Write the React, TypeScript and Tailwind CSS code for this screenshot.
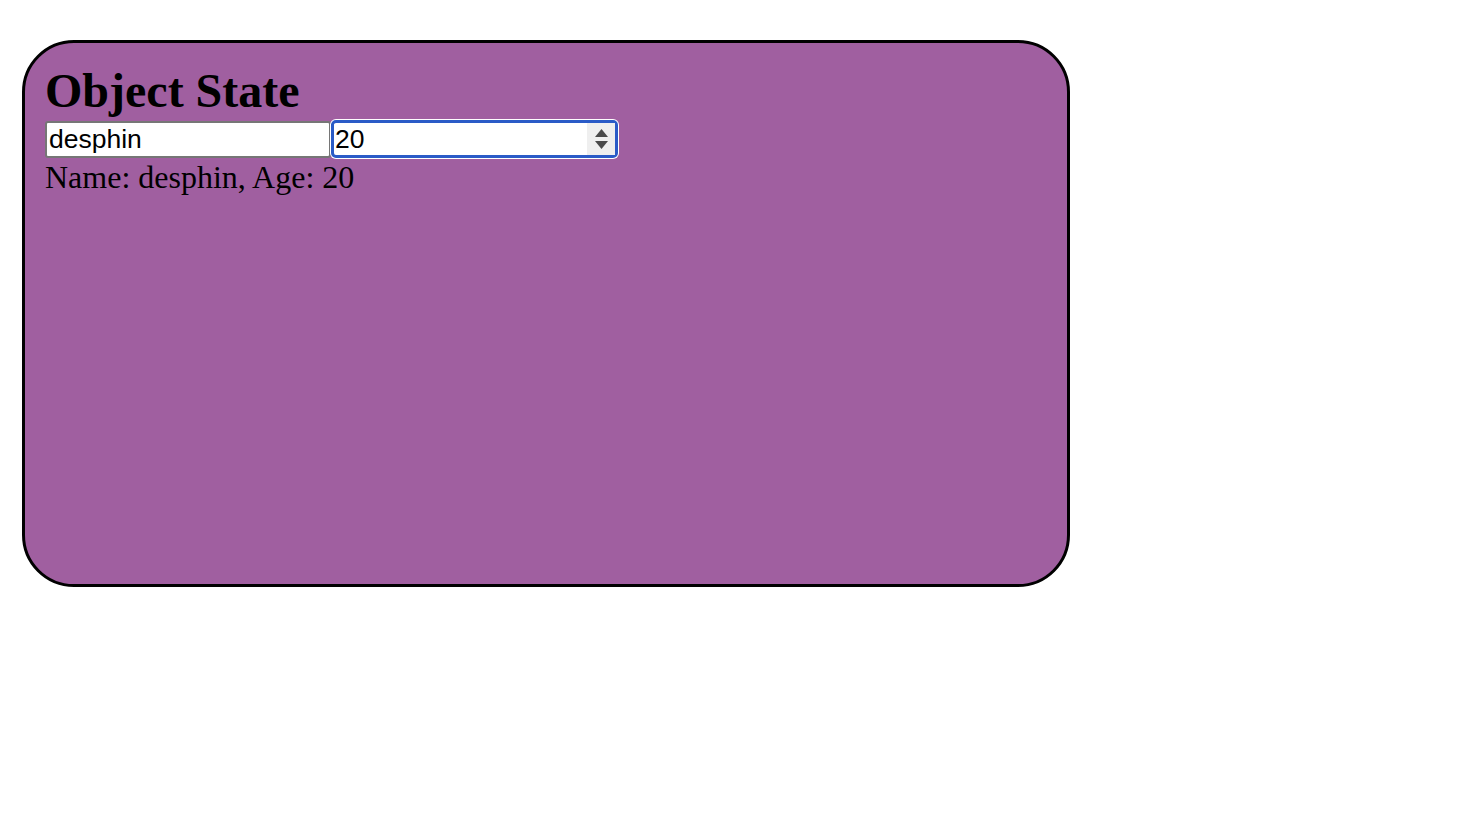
import { useState } from "react";

export default function App() {
  const [person, setPerson] = useState({ name: "desphin", age: 20 });

  return (
    <div className="min-h-screen bg-white pt-[40px] pl-[22px]">
      <div
        className="w-[1048px] h-[547px] rounded-[52px] border-[3px] border-black bg-[#a05fa0] p-[20px] text-black"
        style={{ fontFamily: '"Liberation Serif", "Times New Roman", serif' }}
      >
        <h1 className="text-[48px] font-bold leading-[56px]">Object State</h1>
        <div className="flex items-center h-[40px]">
          {/* Name input */}
          <input
            type="text"
            value={person.name}
            onChange={(e) => setPerson({ ...person, name: e.target.value })}
            className="w-[286px] h-[37px] rounded-[3px] border-2 border-[#767676] bg-white px-[2px] text-[26.5px] leading-none outline-none"
            style={{ fontFamily: '"Liberation Sans", Arial, sans-serif' }}
          />
          {/* Age input, shown focused */}
          <div className="relative w-[289px] h-[40px] rounded-[6px] bg-white p-[1px] -ml-[1px]">
            <div className="flex h-full items-center rounded-[5px] border-[3px] border-[#2a5bc7] bg-white">
              <input
                type="text"
                value={String(person.age)}
                onChange={(e) => setPerson({ ...person, age: Number(e.target.value) || 0 })}
                className="h-full flex-1 min-w-0 bg-transparent pl-[1px] text-[26.5px] leading-none outline-none"
                style={{ fontFamily: '"Liberation Sans", Arial, sans-serif' }}
              />
              <div className="flex h-full w-[28px] flex-col items-center justify-center gap-[4px] bg-[#efefef]">
                <svg width="13" height="8" viewBox="0 0 13 8">
                  <path d="M6.5 0 L13 8 L0 8 Z" fill="#4a4a4a" />
                </svg>
                <svg width="13" height="8" viewBox="0 0 13 8">
                  <path d="M0 0 L13 0 L6.5 8 Z" fill="#4a4a4a" />
                </svg>
              </div>
            </div>
          </div>
        </div>
        <p className="text-[32px] leading-[37px]">
          Name: {person.name}, Age: {person.age}
        </p>
      </div>
    </div>
  );
}
